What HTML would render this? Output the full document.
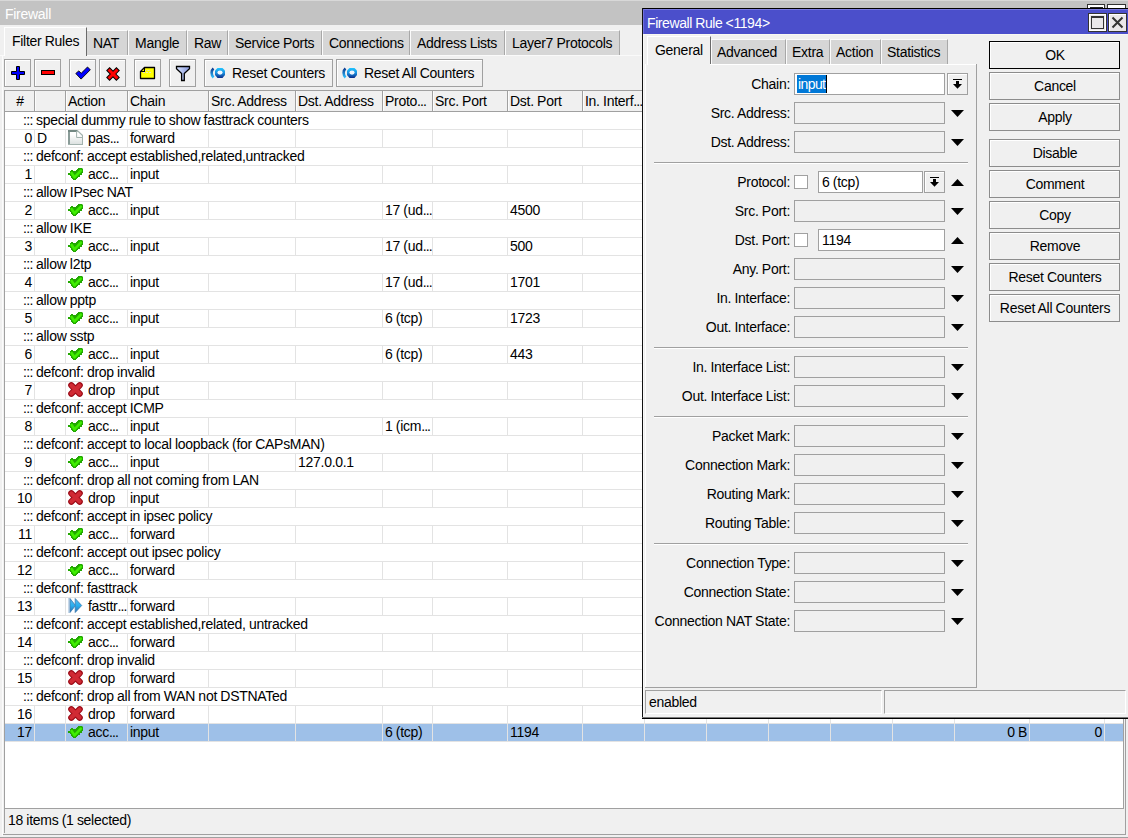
<!DOCTYPE html>
<html><head><meta charset="utf-8"><title>Firewall</title>
<style>
html,body{margin:0;padding:0}
body{width:1128px;height:838px;overflow:hidden;background:#f0f0f0;position:relative;font-family:"Liberation Sans",sans-serif;font-size:13px;color:#000}
body div{position:absolute}
.t{white-space:pre;line-height:15px;font-size:14px;letter-spacing:-0.28px;word-spacing:-0.3px}
svg{display:block}
</style></head><body>
<div style="left:0px;top:0px;width:1128px;height:1px;background:#d8d8d8"></div>
<div style="left:0px;top:1px;width:1128px;height:24px;background:#c3c3c3"></div>
<div class="t" style="left:5px;top:7px;color:#fff">Firewall</div>
<div style="left:1087px;top:4px;width:18px;height:6px;background:#fff;border:1px solid #333;box-sizing:border-box"></div>
<div style="left:1107px;top:4px;width:19px;height:6px;background:#fff;border:1px solid #333;box-sizing:border-box"></div>
<div style="left:1090px;top:7px;width:13px;height:2px;background:#222"></div>
<div style="left:0px;top:55px;width:1128px;height:1px;background:#fafafa"></div>
<div style="left:86px;top:30px;width:42px;height:25px;background:#d6d6d6;border-left:1px solid #fbfbfb;border-top:1px solid #fbfbfb;border-right:1px solid #a8a8a8;box-sizing:border-box"></div>
<div class="t" style="left:93px;top:36px;">NAT</div>
<div style="left:128px;top:30px;width:59px;height:25px;background:#d6d6d6;border-left:1px solid #fbfbfb;border-top:1px solid #fbfbfb;border-right:1px solid #a8a8a8;box-sizing:border-box"></div>
<div class="t" style="left:135px;top:36px;">Mangle</div>
<div style="left:187px;top:30px;width:41px;height:25px;background:#d6d6d6;border-left:1px solid #fbfbfb;border-top:1px solid #fbfbfb;border-right:1px solid #a8a8a8;box-sizing:border-box"></div>
<div class="t" style="left:194px;top:36px;">Raw</div>
<div style="left:228px;top:30px;width:94px;height:25px;background:#d6d6d6;border-left:1px solid #fbfbfb;border-top:1px solid #fbfbfb;border-right:1px solid #a8a8a8;box-sizing:border-box"></div>
<div class="t" style="left:235px;top:36px;">Service Ports</div>
<div style="left:322px;top:30px;width:88px;height:25px;background:#d6d6d6;border-left:1px solid #fbfbfb;border-top:1px solid #fbfbfb;border-right:1px solid #a8a8a8;box-sizing:border-box"></div>
<div class="t" style="left:329px;top:36px;">Connections</div>
<div style="left:410px;top:30px;width:95px;height:25px;background:#d6d6d6;border-left:1px solid #fbfbfb;border-top:1px solid #fbfbfb;border-right:1px solid #a8a8a8;box-sizing:border-box"></div>
<div class="t" style="left:417px;top:36px;">Address Lists</div>
<div style="left:505px;top:30px;width:115px;height:25px;background:#d6d6d6;border-left:1px solid #fbfbfb;border-top:1px solid #fbfbfb;border-right:1px solid #a8a8a8;box-sizing:border-box"></div>
<div class="t" style="left:512px;top:36px;">Layer7 Protocols</div>
<div style="left:4px;top:27px;width:83px;height:29px;background:#f0f0f0;border-left:1px solid #fff;border-top:1px solid #fff;border-right:1px solid #6a6a6a;box-sizing:border-box"></div>
<div class="t" style="left:12px;top:34px;">Filter Rules</div>
<div style="left:2px;top:56px;width:1px;height:780px;background:#fbfbfb"></div>
<div style="left:4px;top:59px;width:27px;height:28px;background:#f0f0f0;border:1px solid #a0a0a0;box-shadow:inset 1px 1px 0 #fff;box-sizing:border-box"></div>
<div style="left:34px;top:59px;width:27px;height:28px;background:#f0f0f0;border:1px solid #a0a0a0;box-shadow:inset 1px 1px 0 #fff;box-sizing:border-box"></div>
<div style="left:69px;top:59px;width:27px;height:28px;background:#f0f0f0;border:1px solid #a0a0a0;box-shadow:inset 1px 1px 0 #fff;box-sizing:border-box"></div>
<div style="left:99px;top:59px;width:27px;height:28px;background:#f0f0f0;border:1px solid #a0a0a0;box-shadow:inset 1px 1px 0 #fff;box-sizing:border-box"></div>
<div style="left:134px;top:59px;width:27px;height:28px;background:#f0f0f0;border:1px solid #a0a0a0;box-shadow:inset 1px 1px 0 #fff;box-sizing:border-box"></div>
<div style="left:169px;top:59px;width:27px;height:28px;background:#f0f0f0;border:1px solid #a0a0a0;box-shadow:inset 1px 1px 0 #fff;box-sizing:border-box"></div>
<div style="left:204px;top:59px;width:129px;height:28px;background:#f0f0f0;border:1px solid #a0a0a0;box-shadow:inset 1px 1px 0 #fff;box-sizing:border-box"></div>
<div style="left:336px;top:59px;width:147px;height:28px;background:#f0f0f0;border:1px solid #a0a0a0;box-shadow:inset 1px 1px 0 #fff;box-sizing:border-box"></div>
<div style="left:10px;top:65px"><svg width="16" height="16" viewBox="0 0 16 16"><path d="M6.5 1.5h3v5h5v3h-5v5h-3v-5h-5v-3h5z" fill="#0000ff" stroke="#000" stroke-width="1"/></svg></div>
<div style="left:40px;top:69px"><svg width="16" height="8" viewBox="0 0 16 8"><rect x="1.5" y="1.5" width="13" height="4" fill="#ff0000" stroke="#000" stroke-width="1"/></svg></div>
<div style="left:75px;top:66px"><svg width="16" height="14" viewBox="0 0 16 14"><path d="M0.8 7.5l3-2.6 2.4 2.4 6.3-6.3 2.8 2.8-9.2 9.3z" fill="#0000ff" stroke="#000" stroke-width="0.9"/></svg></div>
<div style="left:106px;top:67px"><svg width="14" height="14" viewBox="0 0 14 14"><path d="M3.6 3.6L10.4 10.4M10.4 3.6L3.6 10.4" stroke="#000" stroke-width="5" stroke-linecap="square"/><path d="M3.6 3.6L10.4 10.4M10.4 3.6L3.6 10.4" stroke="#ff0000" stroke-width="3" stroke-linecap="square"/></svg></div>
<div style="left:139px;top:66px"><svg width="17" height="14" viewBox="0 0 17 14"><path d="M5.5 1.5h10v11H1.5V5.5z" fill="#ffff00" stroke="#000" stroke-width="1.3" stroke-linejoin="round"/><path d="M1.5 5.5h4v-4" fill="none" stroke="#000" stroke-width="1.1"/><path d="M6 4.5h1M8.5 4.5h2M4 6.5h2M7 6.5h2M10 6.5h2" stroke="#d8d8f0" stroke-width="0.8"/></svg></div>
<div style="left:175px;top:65px"><svg width="16" height="17" viewBox="0 0 16 17"><defs><linearGradient id="fg" x1="0" y1="0" x2="1" y2="0"><stop offset="0" stop-color="#d8e4ff"/><stop offset="1" stop-color="#8898dc"/></linearGradient></defs><path d="M1.5 1.5H14.5V3.8L9.3 8.6V15.5H6.6V8.6L1.5 3.8Z" fill="url(#fg)" stroke="#000" stroke-width="1.3" stroke-linejoin="miter"/></svg></div>
<div style="left:209px;top:67px"><svg width="17" height="12" viewBox="0 0 17 12"><defs><linearGradient id="rg1" x1="0" y1="0" x2="0" y2="1"><stop offset="0" stop-color="#0a3a90"/><stop offset="1" stop-color="#30c0ff"/></linearGradient><linearGradient id="rg2" x1="0" y1="0" x2="0" y2="1"><stop offset="0" stop-color="#20c4ff"/><stop offset="0.5" stop-color="#1a90e0"/><stop offset="1" stop-color="#0a2a88"/></linearGradient></defs><path d="M4.5 1.5C2 3.5 2 8 4.5 10.5" fill="none" stroke="url(#rg1)" stroke-width="2.6"/><path d="M8.5 1h5l2.5 2.5v4.5l-2.5 3h-5l-2.5-3v-4.5z" fill="url(#rg2)"/><ellipse cx="11" cy="5.6" rx="2.6" ry="2.1" fill="#f0f6ff"/></svg></div>
<div class="t" style="left:232px;top:66px;">Reset Counters</div>
<div style="left:341px;top:67px"><svg width="17" height="12" viewBox="0 0 17 12"><defs><linearGradient id="rg1" x1="0" y1="0" x2="0" y2="1"><stop offset="0" stop-color="#0a3a90"/><stop offset="1" stop-color="#30c0ff"/></linearGradient><linearGradient id="rg2" x1="0" y1="0" x2="0" y2="1"><stop offset="0" stop-color="#20c4ff"/><stop offset="0.5" stop-color="#1a90e0"/><stop offset="1" stop-color="#0a2a88"/></linearGradient></defs><path d="M4.5 1.5C2 3.5 2 8 4.5 10.5" fill="none" stroke="url(#rg1)" stroke-width="2.6"/><path d="M8.5 1h5l2.5 2.5v4.5l-2.5 3h-5l-2.5-3v-4.5z" fill="url(#rg2)"/><ellipse cx="11" cy="5.6" rx="2.6" ry="2.1" fill="#f0f6ff"/></svg></div>
<div class="t" style="left:364px;top:66px;">Reset All Counters</div>
<div style="left:4px;top:90px;width:1120px;height:719px;background:#fff;border:1px solid #a0a0a0;box-sizing:border-box"></div>
<div style="left:5px;top:91px;width:1118px;height:20px;background:#f0f0f0"></div>
<div style="left:5px;top:111px;width:1118px;height:1px;background:#a0a0a0"></div>
<div style="left:34px;top:91px;width:1px;height:20px;background:#a0a0a0"></div>
<div style="left:35px;top:91px;width:1px;height:20px;background:#fcfcfc"></div>
<div style="left:65px;top:91px;width:1px;height:20px;background:#a0a0a0"></div>
<div style="left:66px;top:91px;width:1px;height:20px;background:#fcfcfc"></div>
<div style="left:127px;top:91px;width:1px;height:20px;background:#a0a0a0"></div>
<div style="left:128px;top:91px;width:1px;height:20px;background:#fcfcfc"></div>
<div style="left:208px;top:91px;width:1px;height:20px;background:#a0a0a0"></div>
<div style="left:209px;top:91px;width:1px;height:20px;background:#fcfcfc"></div>
<div style="left:295px;top:91px;width:1px;height:20px;background:#a0a0a0"></div>
<div style="left:296px;top:91px;width:1px;height:20px;background:#fcfcfc"></div>
<div style="left:382px;top:91px;width:1px;height:20px;background:#a0a0a0"></div>
<div style="left:383px;top:91px;width:1px;height:20px;background:#fcfcfc"></div>
<div style="left:432px;top:91px;width:1px;height:20px;background:#a0a0a0"></div>
<div style="left:433px;top:91px;width:1px;height:20px;background:#fcfcfc"></div>
<div style="left:507px;top:91px;width:1px;height:20px;background:#a0a0a0"></div>
<div style="left:508px;top:91px;width:1px;height:20px;background:#fcfcfc"></div>
<div style="left:582px;top:91px;width:1px;height:20px;background:#a0a0a0"></div>
<div style="left:583px;top:91px;width:1px;height:20px;background:#fcfcfc"></div>
<div style="left:644px;top:91px;width:1px;height:20px;background:#a0a0a0"></div>
<div style="left:645px;top:91px;width:1px;height:20px;background:#fcfcfc"></div>
<div style="left:706px;top:91px;width:1px;height:20px;background:#a0a0a0"></div>
<div style="left:707px;top:91px;width:1px;height:20px;background:#fcfcfc"></div>
<div style="left:768px;top:91px;width:1px;height:20px;background:#a0a0a0"></div>
<div style="left:769px;top:91px;width:1px;height:20px;background:#fcfcfc"></div>
<div style="left:830px;top:91px;width:1px;height:20px;background:#a0a0a0"></div>
<div style="left:831px;top:91px;width:1px;height:20px;background:#fcfcfc"></div>
<div style="left:892px;top:91px;width:1px;height:20px;background:#a0a0a0"></div>
<div style="left:893px;top:91px;width:1px;height:20px;background:#fcfcfc"></div>
<div style="left:954px;top:91px;width:1px;height:20px;background:#a0a0a0"></div>
<div style="left:955px;top:91px;width:1px;height:20px;background:#fcfcfc"></div>
<div style="left:1029px;top:91px;width:1px;height:20px;background:#a0a0a0"></div>
<div style="left:1030px;top:91px;width:1px;height:20px;background:#fcfcfc"></div>
<div style="left:1104px;top:91px;width:1px;height:20px;background:#a0a0a0"></div>
<div style="left:1105px;top:91px;width:1px;height:20px;background:#fcfcfc"></div>
<div class="t" style="left:-180px;width:400px;text-align:center;top:94px;">#</div>
<div class="t" style="left:68px;top:94px;">Action</div>
<div class="t" style="left:130px;top:94px;">Chain</div>
<div class="t" style="left:211px;top:94px;">Src. Address</div>
<div class="t" style="left:298px;top:94px;">Dst. Address</div>
<div class="t" style="left:385px;top:94px;">Proto<span style="letter-spacing:-0.9px">...</span></div>
<div class="t" style="left:435px;top:94px;">Src. Port</div>
<div class="t" style="left:510px;top:94px;">Dst. Port</div>
<div class="t" style="left:585px;top:94px;">In. Interf<span style="letter-spacing:-0.9px">...</span></div>
<div class="t" style="left:23px;top:113px;letter-spacing:-0.7px">:::</div>
<div class="t" style="left:36px;top:113px;">special dummy rule to show fasttrack counters</div>
<div style="left:5px;top:129px;width:1118px;height:1px;background:#e3e3e3"></div>
<div style="left:34px;top:130px;width:1px;height:17px;background:#e3e3e3"></div>
<div style="left:65px;top:130px;width:1px;height:17px;background:#e3e3e3"></div>
<div style="left:127px;top:130px;width:1px;height:17px;background:#e3e3e3"></div>
<div style="left:208px;top:130px;width:1px;height:17px;background:#e3e3e3"></div>
<div style="left:295px;top:130px;width:1px;height:17px;background:#e3e3e3"></div>
<div style="left:382px;top:130px;width:1px;height:17px;background:#e3e3e3"></div>
<div style="left:432px;top:130px;width:1px;height:17px;background:#e3e3e3"></div>
<div style="left:507px;top:130px;width:1px;height:17px;background:#e3e3e3"></div>
<div style="left:582px;top:130px;width:1px;height:17px;background:#e3e3e3"></div>
<div style="left:644px;top:130px;width:1px;height:17px;background:#e3e3e3"></div>
<div style="left:706px;top:130px;width:1px;height:17px;background:#e3e3e3"></div>
<div style="left:768px;top:130px;width:1px;height:17px;background:#e3e3e3"></div>
<div style="left:830px;top:130px;width:1px;height:17px;background:#e3e3e3"></div>
<div style="left:892px;top:130px;width:1px;height:17px;background:#e3e3e3"></div>
<div style="left:954px;top:130px;width:1px;height:17px;background:#e3e3e3"></div>
<div style="left:1029px;top:130px;width:1px;height:17px;background:#e3e3e3"></div>
<div style="left:1104px;top:130px;width:1px;height:17px;background:#e3e3e3"></div>
<div class="t" style="left:-368px;width:400px;text-align:right;top:131px;">0</div>
<div class="t" style="left:37px;top:131px;">D</div>
<div style="left:68px;top:130px"><svg width="15" height="15" viewBox="0 0 15 15"><defs><linearGradient id="dg" x1="0" y1="0" x2="0" y2="1"><stop offset="0.3" stop-color="#ffffff"/><stop offset="1" stop-color="#d8dedd"/></linearGradient></defs><path d="M0 0H9.6L15 5.4V15H0Z" fill="url(#dg)"/><rect x="0" y="0" width="2" height="15" fill="#8a9c98"/><rect x="0" y="0" width="9.6" height="2" fill="#738883"/><rect x="14" y="5" width="1" height="10" fill="#a2b2ae"/><rect x="0" y="14" width="15" height="1" fill="#a2b2ae"/><path d="M9.4 0.6L14.6 5.6" stroke="#a2b2ae" stroke-width="1.3"/><path d="M8.6 1V7.5H15" fill="none" stroke="#a2b2ae" stroke-width="1"/></svg></div>
<div class="t" style="left:88px;top:131px;">pas<span style="letter-spacing:-0.9px">...</span></div>
<div class="t" style="left:130px;top:131px;">forward</div>
<div style="left:5px;top:147px;width:1118px;height:1px;background:#e3e3e3"></div>
<div class="t" style="left:23px;top:149px;letter-spacing:-0.7px">:::</div>
<div class="t" style="left:36px;top:149px;">defconf: accept established,related,untracked</div>
<div style="left:5px;top:165px;width:1118px;height:1px;background:#e3e3e3"></div>
<div style="left:34px;top:166px;width:1px;height:17px;background:#e3e3e3"></div>
<div style="left:65px;top:166px;width:1px;height:17px;background:#e3e3e3"></div>
<div style="left:127px;top:166px;width:1px;height:17px;background:#e3e3e3"></div>
<div style="left:208px;top:166px;width:1px;height:17px;background:#e3e3e3"></div>
<div style="left:295px;top:166px;width:1px;height:17px;background:#e3e3e3"></div>
<div style="left:382px;top:166px;width:1px;height:17px;background:#e3e3e3"></div>
<div style="left:432px;top:166px;width:1px;height:17px;background:#e3e3e3"></div>
<div style="left:507px;top:166px;width:1px;height:17px;background:#e3e3e3"></div>
<div style="left:582px;top:166px;width:1px;height:17px;background:#e3e3e3"></div>
<div style="left:644px;top:166px;width:1px;height:17px;background:#e3e3e3"></div>
<div style="left:706px;top:166px;width:1px;height:17px;background:#e3e3e3"></div>
<div style="left:768px;top:166px;width:1px;height:17px;background:#e3e3e3"></div>
<div style="left:830px;top:166px;width:1px;height:17px;background:#e3e3e3"></div>
<div style="left:892px;top:166px;width:1px;height:17px;background:#e3e3e3"></div>
<div style="left:954px;top:166px;width:1px;height:17px;background:#e3e3e3"></div>
<div style="left:1029px;top:166px;width:1px;height:17px;background:#e3e3e3"></div>
<div style="left:1104px;top:166px;width:1px;height:17px;background:#e3e3e3"></div>
<div class="t" style="left:-368px;width:400px;text-align:right;top:167px;">1</div>
<div style="left:68px;top:168px"><svg width="15" height="12" viewBox="0 0 15 12"><path d="M10 0H14L15 1V5H14V7H12V9H10V10H9V11H8V12H5V11H4V10H3V8H2V7H0V5H2V3H3V2H5V3H8V2H9V1H10Z" fill="#22a800"/><path d="M3.6 5L6.5 9.3L12.8 2.6" fill="none" stroke="#40ee00" stroke-width="2.6" stroke-linejoin="round" stroke-linecap="round"/></svg></div>
<div class="t" style="left:88px;top:167px;">acc<span style="letter-spacing:-0.9px">...</span></div>
<div class="t" style="left:130px;top:167px;">input</div>
<div style="left:5px;top:183px;width:1118px;height:1px;background:#e3e3e3"></div>
<div class="t" style="left:23px;top:185px;letter-spacing:-0.7px">:::</div>
<div class="t" style="left:36px;top:185px;">allow IPsec NAT</div>
<div style="left:5px;top:201px;width:1118px;height:1px;background:#e3e3e3"></div>
<div style="left:34px;top:202px;width:1px;height:17px;background:#e3e3e3"></div>
<div style="left:65px;top:202px;width:1px;height:17px;background:#e3e3e3"></div>
<div style="left:127px;top:202px;width:1px;height:17px;background:#e3e3e3"></div>
<div style="left:208px;top:202px;width:1px;height:17px;background:#e3e3e3"></div>
<div style="left:295px;top:202px;width:1px;height:17px;background:#e3e3e3"></div>
<div style="left:382px;top:202px;width:1px;height:17px;background:#e3e3e3"></div>
<div style="left:432px;top:202px;width:1px;height:17px;background:#e3e3e3"></div>
<div style="left:507px;top:202px;width:1px;height:17px;background:#e3e3e3"></div>
<div style="left:582px;top:202px;width:1px;height:17px;background:#e3e3e3"></div>
<div style="left:644px;top:202px;width:1px;height:17px;background:#e3e3e3"></div>
<div style="left:706px;top:202px;width:1px;height:17px;background:#e3e3e3"></div>
<div style="left:768px;top:202px;width:1px;height:17px;background:#e3e3e3"></div>
<div style="left:830px;top:202px;width:1px;height:17px;background:#e3e3e3"></div>
<div style="left:892px;top:202px;width:1px;height:17px;background:#e3e3e3"></div>
<div style="left:954px;top:202px;width:1px;height:17px;background:#e3e3e3"></div>
<div style="left:1029px;top:202px;width:1px;height:17px;background:#e3e3e3"></div>
<div style="left:1104px;top:202px;width:1px;height:17px;background:#e3e3e3"></div>
<div class="t" style="left:-368px;width:400px;text-align:right;top:203px;">2</div>
<div style="left:68px;top:204px"><svg width="15" height="12" viewBox="0 0 15 12"><path d="M10 0H14L15 1V5H14V7H12V9H10V10H9V11H8V12H5V11H4V10H3V8H2V7H0V5H2V3H3V2H5V3H8V2H9V1H10Z" fill="#22a800"/><path d="M3.6 5L6.5 9.3L12.8 2.6" fill="none" stroke="#40ee00" stroke-width="2.6" stroke-linejoin="round" stroke-linecap="round"/></svg></div>
<div class="t" style="left:88px;top:203px;">acc<span style="letter-spacing:-0.9px">...</span></div>
<div class="t" style="left:130px;top:203px;">input</div>
<div class="t" style="left:385px;top:203px;">17 (ud<span style="letter-spacing:-0.9px">...</span></div>
<div class="t" style="left:510px;top:203px;">4500</div>
<div style="left:5px;top:219px;width:1118px;height:1px;background:#e3e3e3"></div>
<div class="t" style="left:23px;top:221px;letter-spacing:-0.7px">:::</div>
<div class="t" style="left:36px;top:221px;">allow IKE</div>
<div style="left:5px;top:237px;width:1118px;height:1px;background:#e3e3e3"></div>
<div style="left:34px;top:238px;width:1px;height:17px;background:#e3e3e3"></div>
<div style="left:65px;top:238px;width:1px;height:17px;background:#e3e3e3"></div>
<div style="left:127px;top:238px;width:1px;height:17px;background:#e3e3e3"></div>
<div style="left:208px;top:238px;width:1px;height:17px;background:#e3e3e3"></div>
<div style="left:295px;top:238px;width:1px;height:17px;background:#e3e3e3"></div>
<div style="left:382px;top:238px;width:1px;height:17px;background:#e3e3e3"></div>
<div style="left:432px;top:238px;width:1px;height:17px;background:#e3e3e3"></div>
<div style="left:507px;top:238px;width:1px;height:17px;background:#e3e3e3"></div>
<div style="left:582px;top:238px;width:1px;height:17px;background:#e3e3e3"></div>
<div style="left:644px;top:238px;width:1px;height:17px;background:#e3e3e3"></div>
<div style="left:706px;top:238px;width:1px;height:17px;background:#e3e3e3"></div>
<div style="left:768px;top:238px;width:1px;height:17px;background:#e3e3e3"></div>
<div style="left:830px;top:238px;width:1px;height:17px;background:#e3e3e3"></div>
<div style="left:892px;top:238px;width:1px;height:17px;background:#e3e3e3"></div>
<div style="left:954px;top:238px;width:1px;height:17px;background:#e3e3e3"></div>
<div style="left:1029px;top:238px;width:1px;height:17px;background:#e3e3e3"></div>
<div style="left:1104px;top:238px;width:1px;height:17px;background:#e3e3e3"></div>
<div class="t" style="left:-368px;width:400px;text-align:right;top:239px;">3</div>
<div style="left:68px;top:240px"><svg width="15" height="12" viewBox="0 0 15 12"><path d="M10 0H14L15 1V5H14V7H12V9H10V10H9V11H8V12H5V11H4V10H3V8H2V7H0V5H2V3H3V2H5V3H8V2H9V1H10Z" fill="#22a800"/><path d="M3.6 5L6.5 9.3L12.8 2.6" fill="none" stroke="#40ee00" stroke-width="2.6" stroke-linejoin="round" stroke-linecap="round"/></svg></div>
<div class="t" style="left:88px;top:239px;">acc<span style="letter-spacing:-0.9px">...</span></div>
<div class="t" style="left:130px;top:239px;">input</div>
<div class="t" style="left:385px;top:239px;">17 (ud<span style="letter-spacing:-0.9px">...</span></div>
<div class="t" style="left:510px;top:239px;">500</div>
<div style="left:5px;top:255px;width:1118px;height:1px;background:#e3e3e3"></div>
<div class="t" style="left:23px;top:257px;letter-spacing:-0.7px">:::</div>
<div class="t" style="left:36px;top:257px;">allow l2tp</div>
<div style="left:5px;top:273px;width:1118px;height:1px;background:#e3e3e3"></div>
<div style="left:34px;top:274px;width:1px;height:17px;background:#e3e3e3"></div>
<div style="left:65px;top:274px;width:1px;height:17px;background:#e3e3e3"></div>
<div style="left:127px;top:274px;width:1px;height:17px;background:#e3e3e3"></div>
<div style="left:208px;top:274px;width:1px;height:17px;background:#e3e3e3"></div>
<div style="left:295px;top:274px;width:1px;height:17px;background:#e3e3e3"></div>
<div style="left:382px;top:274px;width:1px;height:17px;background:#e3e3e3"></div>
<div style="left:432px;top:274px;width:1px;height:17px;background:#e3e3e3"></div>
<div style="left:507px;top:274px;width:1px;height:17px;background:#e3e3e3"></div>
<div style="left:582px;top:274px;width:1px;height:17px;background:#e3e3e3"></div>
<div style="left:644px;top:274px;width:1px;height:17px;background:#e3e3e3"></div>
<div style="left:706px;top:274px;width:1px;height:17px;background:#e3e3e3"></div>
<div style="left:768px;top:274px;width:1px;height:17px;background:#e3e3e3"></div>
<div style="left:830px;top:274px;width:1px;height:17px;background:#e3e3e3"></div>
<div style="left:892px;top:274px;width:1px;height:17px;background:#e3e3e3"></div>
<div style="left:954px;top:274px;width:1px;height:17px;background:#e3e3e3"></div>
<div style="left:1029px;top:274px;width:1px;height:17px;background:#e3e3e3"></div>
<div style="left:1104px;top:274px;width:1px;height:17px;background:#e3e3e3"></div>
<div class="t" style="left:-368px;width:400px;text-align:right;top:275px;">4</div>
<div style="left:68px;top:276px"><svg width="15" height="12" viewBox="0 0 15 12"><path d="M10 0H14L15 1V5H14V7H12V9H10V10H9V11H8V12H5V11H4V10H3V8H2V7H0V5H2V3H3V2H5V3H8V2H9V1H10Z" fill="#22a800"/><path d="M3.6 5L6.5 9.3L12.8 2.6" fill="none" stroke="#40ee00" stroke-width="2.6" stroke-linejoin="round" stroke-linecap="round"/></svg></div>
<div class="t" style="left:88px;top:275px;">acc<span style="letter-spacing:-0.9px">...</span></div>
<div class="t" style="left:130px;top:275px;">input</div>
<div class="t" style="left:385px;top:275px;">17 (ud<span style="letter-spacing:-0.9px">...</span></div>
<div class="t" style="left:510px;top:275px;">1701</div>
<div style="left:5px;top:291px;width:1118px;height:1px;background:#e3e3e3"></div>
<div class="t" style="left:23px;top:293px;letter-spacing:-0.7px">:::</div>
<div class="t" style="left:36px;top:293px;">allow pptp</div>
<div style="left:5px;top:309px;width:1118px;height:1px;background:#e3e3e3"></div>
<div style="left:34px;top:310px;width:1px;height:17px;background:#e3e3e3"></div>
<div style="left:65px;top:310px;width:1px;height:17px;background:#e3e3e3"></div>
<div style="left:127px;top:310px;width:1px;height:17px;background:#e3e3e3"></div>
<div style="left:208px;top:310px;width:1px;height:17px;background:#e3e3e3"></div>
<div style="left:295px;top:310px;width:1px;height:17px;background:#e3e3e3"></div>
<div style="left:382px;top:310px;width:1px;height:17px;background:#e3e3e3"></div>
<div style="left:432px;top:310px;width:1px;height:17px;background:#e3e3e3"></div>
<div style="left:507px;top:310px;width:1px;height:17px;background:#e3e3e3"></div>
<div style="left:582px;top:310px;width:1px;height:17px;background:#e3e3e3"></div>
<div style="left:644px;top:310px;width:1px;height:17px;background:#e3e3e3"></div>
<div style="left:706px;top:310px;width:1px;height:17px;background:#e3e3e3"></div>
<div style="left:768px;top:310px;width:1px;height:17px;background:#e3e3e3"></div>
<div style="left:830px;top:310px;width:1px;height:17px;background:#e3e3e3"></div>
<div style="left:892px;top:310px;width:1px;height:17px;background:#e3e3e3"></div>
<div style="left:954px;top:310px;width:1px;height:17px;background:#e3e3e3"></div>
<div style="left:1029px;top:310px;width:1px;height:17px;background:#e3e3e3"></div>
<div style="left:1104px;top:310px;width:1px;height:17px;background:#e3e3e3"></div>
<div class="t" style="left:-368px;width:400px;text-align:right;top:311px;">5</div>
<div style="left:68px;top:312px"><svg width="15" height="12" viewBox="0 0 15 12"><path d="M10 0H14L15 1V5H14V7H12V9H10V10H9V11H8V12H5V11H4V10H3V8H2V7H0V5H2V3H3V2H5V3H8V2H9V1H10Z" fill="#22a800"/><path d="M3.6 5L6.5 9.3L12.8 2.6" fill="none" stroke="#40ee00" stroke-width="2.6" stroke-linejoin="round" stroke-linecap="round"/></svg></div>
<div class="t" style="left:88px;top:311px;">acc<span style="letter-spacing:-0.9px">...</span></div>
<div class="t" style="left:130px;top:311px;">input</div>
<div class="t" style="left:385px;top:311px;">6 (tcp)</div>
<div class="t" style="left:510px;top:311px;">1723</div>
<div style="left:5px;top:327px;width:1118px;height:1px;background:#e3e3e3"></div>
<div class="t" style="left:23px;top:329px;letter-spacing:-0.7px">:::</div>
<div class="t" style="left:36px;top:329px;">allow sstp</div>
<div style="left:5px;top:345px;width:1118px;height:1px;background:#e3e3e3"></div>
<div style="left:34px;top:346px;width:1px;height:17px;background:#e3e3e3"></div>
<div style="left:65px;top:346px;width:1px;height:17px;background:#e3e3e3"></div>
<div style="left:127px;top:346px;width:1px;height:17px;background:#e3e3e3"></div>
<div style="left:208px;top:346px;width:1px;height:17px;background:#e3e3e3"></div>
<div style="left:295px;top:346px;width:1px;height:17px;background:#e3e3e3"></div>
<div style="left:382px;top:346px;width:1px;height:17px;background:#e3e3e3"></div>
<div style="left:432px;top:346px;width:1px;height:17px;background:#e3e3e3"></div>
<div style="left:507px;top:346px;width:1px;height:17px;background:#e3e3e3"></div>
<div style="left:582px;top:346px;width:1px;height:17px;background:#e3e3e3"></div>
<div style="left:644px;top:346px;width:1px;height:17px;background:#e3e3e3"></div>
<div style="left:706px;top:346px;width:1px;height:17px;background:#e3e3e3"></div>
<div style="left:768px;top:346px;width:1px;height:17px;background:#e3e3e3"></div>
<div style="left:830px;top:346px;width:1px;height:17px;background:#e3e3e3"></div>
<div style="left:892px;top:346px;width:1px;height:17px;background:#e3e3e3"></div>
<div style="left:954px;top:346px;width:1px;height:17px;background:#e3e3e3"></div>
<div style="left:1029px;top:346px;width:1px;height:17px;background:#e3e3e3"></div>
<div style="left:1104px;top:346px;width:1px;height:17px;background:#e3e3e3"></div>
<div class="t" style="left:-368px;width:400px;text-align:right;top:347px;">6</div>
<div style="left:68px;top:348px"><svg width="15" height="12" viewBox="0 0 15 12"><path d="M10 0H14L15 1V5H14V7H12V9H10V10H9V11H8V12H5V11H4V10H3V8H2V7H0V5H2V3H3V2H5V3H8V2H9V1H10Z" fill="#22a800"/><path d="M3.6 5L6.5 9.3L12.8 2.6" fill="none" stroke="#40ee00" stroke-width="2.6" stroke-linejoin="round" stroke-linecap="round"/></svg></div>
<div class="t" style="left:88px;top:347px;">acc<span style="letter-spacing:-0.9px">...</span></div>
<div class="t" style="left:130px;top:347px;">input</div>
<div class="t" style="left:385px;top:347px;">6 (tcp)</div>
<div class="t" style="left:510px;top:347px;">443</div>
<div style="left:5px;top:363px;width:1118px;height:1px;background:#e3e3e3"></div>
<div class="t" style="left:23px;top:365px;letter-spacing:-0.7px">:::</div>
<div class="t" style="left:36px;top:365px;">defconf: drop invalid</div>
<div style="left:5px;top:381px;width:1118px;height:1px;background:#e3e3e3"></div>
<div style="left:34px;top:382px;width:1px;height:17px;background:#e3e3e3"></div>
<div style="left:65px;top:382px;width:1px;height:17px;background:#e3e3e3"></div>
<div style="left:127px;top:382px;width:1px;height:17px;background:#e3e3e3"></div>
<div style="left:208px;top:382px;width:1px;height:17px;background:#e3e3e3"></div>
<div style="left:295px;top:382px;width:1px;height:17px;background:#e3e3e3"></div>
<div style="left:382px;top:382px;width:1px;height:17px;background:#e3e3e3"></div>
<div style="left:432px;top:382px;width:1px;height:17px;background:#e3e3e3"></div>
<div style="left:507px;top:382px;width:1px;height:17px;background:#e3e3e3"></div>
<div style="left:582px;top:382px;width:1px;height:17px;background:#e3e3e3"></div>
<div style="left:644px;top:382px;width:1px;height:17px;background:#e3e3e3"></div>
<div style="left:706px;top:382px;width:1px;height:17px;background:#e3e3e3"></div>
<div style="left:768px;top:382px;width:1px;height:17px;background:#e3e3e3"></div>
<div style="left:830px;top:382px;width:1px;height:17px;background:#e3e3e3"></div>
<div style="left:892px;top:382px;width:1px;height:17px;background:#e3e3e3"></div>
<div style="left:954px;top:382px;width:1px;height:17px;background:#e3e3e3"></div>
<div style="left:1029px;top:382px;width:1px;height:17px;background:#e3e3e3"></div>
<div style="left:1104px;top:382px;width:1px;height:17px;background:#e3e3e3"></div>
<div class="t" style="left:-368px;width:400px;text-align:right;top:383px;">7</div>
<div style="left:68px;top:382px"><svg width="15" height="15" viewBox="0 0 15 15"><path d="M3.3 3.3L11.7 11.7M11.7 3.3L3.3 11.7" fill="none" stroke="#9a0a16" stroke-width="6.2" stroke-linecap="round"/><path d="M3.4 3.4L11.6 11.6M11.6 3.4L3.4 11.6" fill="none" stroke="#d02a34" stroke-width="4.2" stroke-linecap="round"/></svg></div>
<div class="t" style="left:88px;top:383px;">drop</div>
<div class="t" style="left:130px;top:383px;">input</div>
<div style="left:5px;top:399px;width:1118px;height:1px;background:#e3e3e3"></div>
<div class="t" style="left:23px;top:401px;letter-spacing:-0.7px">:::</div>
<div class="t" style="left:36px;top:401px;">defconf: accept ICMP</div>
<div style="left:5px;top:417px;width:1118px;height:1px;background:#e3e3e3"></div>
<div style="left:34px;top:418px;width:1px;height:17px;background:#e3e3e3"></div>
<div style="left:65px;top:418px;width:1px;height:17px;background:#e3e3e3"></div>
<div style="left:127px;top:418px;width:1px;height:17px;background:#e3e3e3"></div>
<div style="left:208px;top:418px;width:1px;height:17px;background:#e3e3e3"></div>
<div style="left:295px;top:418px;width:1px;height:17px;background:#e3e3e3"></div>
<div style="left:382px;top:418px;width:1px;height:17px;background:#e3e3e3"></div>
<div style="left:432px;top:418px;width:1px;height:17px;background:#e3e3e3"></div>
<div style="left:507px;top:418px;width:1px;height:17px;background:#e3e3e3"></div>
<div style="left:582px;top:418px;width:1px;height:17px;background:#e3e3e3"></div>
<div style="left:644px;top:418px;width:1px;height:17px;background:#e3e3e3"></div>
<div style="left:706px;top:418px;width:1px;height:17px;background:#e3e3e3"></div>
<div style="left:768px;top:418px;width:1px;height:17px;background:#e3e3e3"></div>
<div style="left:830px;top:418px;width:1px;height:17px;background:#e3e3e3"></div>
<div style="left:892px;top:418px;width:1px;height:17px;background:#e3e3e3"></div>
<div style="left:954px;top:418px;width:1px;height:17px;background:#e3e3e3"></div>
<div style="left:1029px;top:418px;width:1px;height:17px;background:#e3e3e3"></div>
<div style="left:1104px;top:418px;width:1px;height:17px;background:#e3e3e3"></div>
<div class="t" style="left:-368px;width:400px;text-align:right;top:419px;">8</div>
<div style="left:68px;top:420px"><svg width="15" height="12" viewBox="0 0 15 12"><path d="M10 0H14L15 1V5H14V7H12V9H10V10H9V11H8V12H5V11H4V10H3V8H2V7H0V5H2V3H3V2H5V3H8V2H9V1H10Z" fill="#22a800"/><path d="M3.6 5L6.5 9.3L12.8 2.6" fill="none" stroke="#40ee00" stroke-width="2.6" stroke-linejoin="round" stroke-linecap="round"/></svg></div>
<div class="t" style="left:88px;top:419px;">acc<span style="letter-spacing:-0.9px">...</span></div>
<div class="t" style="left:130px;top:419px;">input</div>
<div class="t" style="left:385px;top:419px;">1 (icm<span style="letter-spacing:-0.9px">...</span></div>
<div style="left:5px;top:435px;width:1118px;height:1px;background:#e3e3e3"></div>
<div class="t" style="left:23px;top:437px;letter-spacing:-0.7px">:::</div>
<div class="t" style="left:36px;top:437px;">defconf: accept to local loopback (for CAPsMAN)</div>
<div style="left:5px;top:453px;width:1118px;height:1px;background:#e3e3e3"></div>
<div style="left:34px;top:454px;width:1px;height:17px;background:#e3e3e3"></div>
<div style="left:65px;top:454px;width:1px;height:17px;background:#e3e3e3"></div>
<div style="left:127px;top:454px;width:1px;height:17px;background:#e3e3e3"></div>
<div style="left:208px;top:454px;width:1px;height:17px;background:#e3e3e3"></div>
<div style="left:295px;top:454px;width:1px;height:17px;background:#e3e3e3"></div>
<div style="left:382px;top:454px;width:1px;height:17px;background:#e3e3e3"></div>
<div style="left:432px;top:454px;width:1px;height:17px;background:#e3e3e3"></div>
<div style="left:507px;top:454px;width:1px;height:17px;background:#e3e3e3"></div>
<div style="left:582px;top:454px;width:1px;height:17px;background:#e3e3e3"></div>
<div style="left:644px;top:454px;width:1px;height:17px;background:#e3e3e3"></div>
<div style="left:706px;top:454px;width:1px;height:17px;background:#e3e3e3"></div>
<div style="left:768px;top:454px;width:1px;height:17px;background:#e3e3e3"></div>
<div style="left:830px;top:454px;width:1px;height:17px;background:#e3e3e3"></div>
<div style="left:892px;top:454px;width:1px;height:17px;background:#e3e3e3"></div>
<div style="left:954px;top:454px;width:1px;height:17px;background:#e3e3e3"></div>
<div style="left:1029px;top:454px;width:1px;height:17px;background:#e3e3e3"></div>
<div style="left:1104px;top:454px;width:1px;height:17px;background:#e3e3e3"></div>
<div class="t" style="left:-368px;width:400px;text-align:right;top:455px;">9</div>
<div style="left:68px;top:456px"><svg width="15" height="12" viewBox="0 0 15 12"><path d="M10 0H14L15 1V5H14V7H12V9H10V10H9V11H8V12H5V11H4V10H3V8H2V7H0V5H2V3H3V2H5V3H8V2H9V1H10Z" fill="#22a800"/><path d="M3.6 5L6.5 9.3L12.8 2.6" fill="none" stroke="#40ee00" stroke-width="2.6" stroke-linejoin="round" stroke-linecap="round"/></svg></div>
<div class="t" style="left:88px;top:455px;">acc<span style="letter-spacing:-0.9px">...</span></div>
<div class="t" style="left:130px;top:455px;">input</div>
<div class="t" style="left:298px;top:455px;">127.0.0.1</div>
<div style="left:5px;top:471px;width:1118px;height:1px;background:#e3e3e3"></div>
<div class="t" style="left:23px;top:473px;letter-spacing:-0.7px">:::</div>
<div class="t" style="left:36px;top:473px;">defconf: drop all not coming from LAN</div>
<div style="left:5px;top:489px;width:1118px;height:1px;background:#e3e3e3"></div>
<div style="left:34px;top:490px;width:1px;height:17px;background:#e3e3e3"></div>
<div style="left:65px;top:490px;width:1px;height:17px;background:#e3e3e3"></div>
<div style="left:127px;top:490px;width:1px;height:17px;background:#e3e3e3"></div>
<div style="left:208px;top:490px;width:1px;height:17px;background:#e3e3e3"></div>
<div style="left:295px;top:490px;width:1px;height:17px;background:#e3e3e3"></div>
<div style="left:382px;top:490px;width:1px;height:17px;background:#e3e3e3"></div>
<div style="left:432px;top:490px;width:1px;height:17px;background:#e3e3e3"></div>
<div style="left:507px;top:490px;width:1px;height:17px;background:#e3e3e3"></div>
<div style="left:582px;top:490px;width:1px;height:17px;background:#e3e3e3"></div>
<div style="left:644px;top:490px;width:1px;height:17px;background:#e3e3e3"></div>
<div style="left:706px;top:490px;width:1px;height:17px;background:#e3e3e3"></div>
<div style="left:768px;top:490px;width:1px;height:17px;background:#e3e3e3"></div>
<div style="left:830px;top:490px;width:1px;height:17px;background:#e3e3e3"></div>
<div style="left:892px;top:490px;width:1px;height:17px;background:#e3e3e3"></div>
<div style="left:954px;top:490px;width:1px;height:17px;background:#e3e3e3"></div>
<div style="left:1029px;top:490px;width:1px;height:17px;background:#e3e3e3"></div>
<div style="left:1104px;top:490px;width:1px;height:17px;background:#e3e3e3"></div>
<div class="t" style="left:-368px;width:400px;text-align:right;top:491px;">10</div>
<div style="left:68px;top:490px"><svg width="15" height="15" viewBox="0 0 15 15"><path d="M3.3 3.3L11.7 11.7M11.7 3.3L3.3 11.7" fill="none" stroke="#9a0a16" stroke-width="6.2" stroke-linecap="round"/><path d="M3.4 3.4L11.6 11.6M11.6 3.4L3.4 11.6" fill="none" stroke="#d02a34" stroke-width="4.2" stroke-linecap="round"/></svg></div>
<div class="t" style="left:88px;top:491px;">drop</div>
<div class="t" style="left:130px;top:491px;">input</div>
<div style="left:5px;top:507px;width:1118px;height:1px;background:#e3e3e3"></div>
<div class="t" style="left:23px;top:509px;letter-spacing:-0.7px">:::</div>
<div class="t" style="left:36px;top:509px;">defconf: accept in ipsec policy</div>
<div style="left:5px;top:525px;width:1118px;height:1px;background:#e3e3e3"></div>
<div style="left:34px;top:526px;width:1px;height:17px;background:#e3e3e3"></div>
<div style="left:65px;top:526px;width:1px;height:17px;background:#e3e3e3"></div>
<div style="left:127px;top:526px;width:1px;height:17px;background:#e3e3e3"></div>
<div style="left:208px;top:526px;width:1px;height:17px;background:#e3e3e3"></div>
<div style="left:295px;top:526px;width:1px;height:17px;background:#e3e3e3"></div>
<div style="left:382px;top:526px;width:1px;height:17px;background:#e3e3e3"></div>
<div style="left:432px;top:526px;width:1px;height:17px;background:#e3e3e3"></div>
<div style="left:507px;top:526px;width:1px;height:17px;background:#e3e3e3"></div>
<div style="left:582px;top:526px;width:1px;height:17px;background:#e3e3e3"></div>
<div style="left:644px;top:526px;width:1px;height:17px;background:#e3e3e3"></div>
<div style="left:706px;top:526px;width:1px;height:17px;background:#e3e3e3"></div>
<div style="left:768px;top:526px;width:1px;height:17px;background:#e3e3e3"></div>
<div style="left:830px;top:526px;width:1px;height:17px;background:#e3e3e3"></div>
<div style="left:892px;top:526px;width:1px;height:17px;background:#e3e3e3"></div>
<div style="left:954px;top:526px;width:1px;height:17px;background:#e3e3e3"></div>
<div style="left:1029px;top:526px;width:1px;height:17px;background:#e3e3e3"></div>
<div style="left:1104px;top:526px;width:1px;height:17px;background:#e3e3e3"></div>
<div class="t" style="left:-368px;width:400px;text-align:right;top:527px;">11</div>
<div style="left:68px;top:528px"><svg width="15" height="12" viewBox="0 0 15 12"><path d="M10 0H14L15 1V5H14V7H12V9H10V10H9V11H8V12H5V11H4V10H3V8H2V7H0V5H2V3H3V2H5V3H8V2H9V1H10Z" fill="#22a800"/><path d="M3.6 5L6.5 9.3L12.8 2.6" fill="none" stroke="#40ee00" stroke-width="2.6" stroke-linejoin="round" stroke-linecap="round"/></svg></div>
<div class="t" style="left:88px;top:527px;">acc<span style="letter-spacing:-0.9px">...</span></div>
<div class="t" style="left:130px;top:527px;">forward</div>
<div style="left:5px;top:543px;width:1118px;height:1px;background:#e3e3e3"></div>
<div class="t" style="left:23px;top:545px;letter-spacing:-0.7px">:::</div>
<div class="t" style="left:36px;top:545px;">defconf: accept out ipsec policy</div>
<div style="left:5px;top:561px;width:1118px;height:1px;background:#e3e3e3"></div>
<div style="left:34px;top:562px;width:1px;height:17px;background:#e3e3e3"></div>
<div style="left:65px;top:562px;width:1px;height:17px;background:#e3e3e3"></div>
<div style="left:127px;top:562px;width:1px;height:17px;background:#e3e3e3"></div>
<div style="left:208px;top:562px;width:1px;height:17px;background:#e3e3e3"></div>
<div style="left:295px;top:562px;width:1px;height:17px;background:#e3e3e3"></div>
<div style="left:382px;top:562px;width:1px;height:17px;background:#e3e3e3"></div>
<div style="left:432px;top:562px;width:1px;height:17px;background:#e3e3e3"></div>
<div style="left:507px;top:562px;width:1px;height:17px;background:#e3e3e3"></div>
<div style="left:582px;top:562px;width:1px;height:17px;background:#e3e3e3"></div>
<div style="left:644px;top:562px;width:1px;height:17px;background:#e3e3e3"></div>
<div style="left:706px;top:562px;width:1px;height:17px;background:#e3e3e3"></div>
<div style="left:768px;top:562px;width:1px;height:17px;background:#e3e3e3"></div>
<div style="left:830px;top:562px;width:1px;height:17px;background:#e3e3e3"></div>
<div style="left:892px;top:562px;width:1px;height:17px;background:#e3e3e3"></div>
<div style="left:954px;top:562px;width:1px;height:17px;background:#e3e3e3"></div>
<div style="left:1029px;top:562px;width:1px;height:17px;background:#e3e3e3"></div>
<div style="left:1104px;top:562px;width:1px;height:17px;background:#e3e3e3"></div>
<div class="t" style="left:-368px;width:400px;text-align:right;top:563px;">12</div>
<div style="left:68px;top:564px"><svg width="15" height="12" viewBox="0 0 15 12"><path d="M10 0H14L15 1V5H14V7H12V9H10V10H9V11H8V12H5V11H4V10H3V8H2V7H0V5H2V3H3V2H5V3H8V2H9V1H10Z" fill="#22a800"/><path d="M3.6 5L6.5 9.3L12.8 2.6" fill="none" stroke="#40ee00" stroke-width="2.6" stroke-linejoin="round" stroke-linecap="round"/></svg></div>
<div class="t" style="left:88px;top:563px;">acc<span style="letter-spacing:-0.9px">...</span></div>
<div class="t" style="left:130px;top:563px;">forward</div>
<div style="left:5px;top:579px;width:1118px;height:1px;background:#e3e3e3"></div>
<div class="t" style="left:23px;top:581px;letter-spacing:-0.7px">:::</div>
<div class="t" style="left:36px;top:581px;">defconf: fasttrack</div>
<div style="left:5px;top:597px;width:1118px;height:1px;background:#e3e3e3"></div>
<div style="left:34px;top:598px;width:1px;height:17px;background:#e3e3e3"></div>
<div style="left:65px;top:598px;width:1px;height:17px;background:#e3e3e3"></div>
<div style="left:127px;top:598px;width:1px;height:17px;background:#e3e3e3"></div>
<div style="left:208px;top:598px;width:1px;height:17px;background:#e3e3e3"></div>
<div style="left:295px;top:598px;width:1px;height:17px;background:#e3e3e3"></div>
<div style="left:382px;top:598px;width:1px;height:17px;background:#e3e3e3"></div>
<div style="left:432px;top:598px;width:1px;height:17px;background:#e3e3e3"></div>
<div style="left:507px;top:598px;width:1px;height:17px;background:#e3e3e3"></div>
<div style="left:582px;top:598px;width:1px;height:17px;background:#e3e3e3"></div>
<div style="left:644px;top:598px;width:1px;height:17px;background:#e3e3e3"></div>
<div style="left:706px;top:598px;width:1px;height:17px;background:#e3e3e3"></div>
<div style="left:768px;top:598px;width:1px;height:17px;background:#e3e3e3"></div>
<div style="left:830px;top:598px;width:1px;height:17px;background:#e3e3e3"></div>
<div style="left:892px;top:598px;width:1px;height:17px;background:#e3e3e3"></div>
<div style="left:954px;top:598px;width:1px;height:17px;background:#e3e3e3"></div>
<div style="left:1029px;top:598px;width:1px;height:17px;background:#e3e3e3"></div>
<div style="left:1104px;top:598px;width:1px;height:17px;background:#e3e3e3"></div>
<div class="t" style="left:-368px;width:400px;text-align:right;top:599px;">13</div>
<div style="left:68px;top:598px"><svg width="15" height="15" viewBox="0 0 15 15"><defs><linearGradient id="ftg" x1="0" y1="0" x2="0" y2="1"><stop offset="0" stop-color="#5ab8e8"/><stop offset="0.5" stop-color="#2ab0f0"/><stop offset="1" stop-color="#2a70b0"/></linearGradient></defs><rect x="0" y="0" width="1.6" height="15" fill="#c8d8e8"/><path d="M2 0.5l5.5 7-5.5 7z" fill="url(#ftg)" stroke="#3a78b0" stroke-width="0.8"/><path d="M7.2 0.5l6.5 7-6.5 7z" fill="url(#ftg)" stroke="#3a78b0" stroke-width="0.8"/></svg></div>
<div class="t" style="left:88px;top:599px;">fasttr<span style="letter-spacing:-0.9px">...</span></div>
<div class="t" style="left:130px;top:599px;">forward</div>
<div style="left:5px;top:615px;width:1118px;height:1px;background:#e3e3e3"></div>
<div class="t" style="left:23px;top:617px;letter-spacing:-0.7px">:::</div>
<div class="t" style="left:36px;top:617px;">defconf: accept established,related, untracked</div>
<div style="left:5px;top:633px;width:1118px;height:1px;background:#e3e3e3"></div>
<div style="left:34px;top:634px;width:1px;height:17px;background:#e3e3e3"></div>
<div style="left:65px;top:634px;width:1px;height:17px;background:#e3e3e3"></div>
<div style="left:127px;top:634px;width:1px;height:17px;background:#e3e3e3"></div>
<div style="left:208px;top:634px;width:1px;height:17px;background:#e3e3e3"></div>
<div style="left:295px;top:634px;width:1px;height:17px;background:#e3e3e3"></div>
<div style="left:382px;top:634px;width:1px;height:17px;background:#e3e3e3"></div>
<div style="left:432px;top:634px;width:1px;height:17px;background:#e3e3e3"></div>
<div style="left:507px;top:634px;width:1px;height:17px;background:#e3e3e3"></div>
<div style="left:582px;top:634px;width:1px;height:17px;background:#e3e3e3"></div>
<div style="left:644px;top:634px;width:1px;height:17px;background:#e3e3e3"></div>
<div style="left:706px;top:634px;width:1px;height:17px;background:#e3e3e3"></div>
<div style="left:768px;top:634px;width:1px;height:17px;background:#e3e3e3"></div>
<div style="left:830px;top:634px;width:1px;height:17px;background:#e3e3e3"></div>
<div style="left:892px;top:634px;width:1px;height:17px;background:#e3e3e3"></div>
<div style="left:954px;top:634px;width:1px;height:17px;background:#e3e3e3"></div>
<div style="left:1029px;top:634px;width:1px;height:17px;background:#e3e3e3"></div>
<div style="left:1104px;top:634px;width:1px;height:17px;background:#e3e3e3"></div>
<div class="t" style="left:-368px;width:400px;text-align:right;top:635px;">14</div>
<div style="left:68px;top:636px"><svg width="15" height="12" viewBox="0 0 15 12"><path d="M10 0H14L15 1V5H14V7H12V9H10V10H9V11H8V12H5V11H4V10H3V8H2V7H0V5H2V3H3V2H5V3H8V2H9V1H10Z" fill="#22a800"/><path d="M3.6 5L6.5 9.3L12.8 2.6" fill="none" stroke="#40ee00" stroke-width="2.6" stroke-linejoin="round" stroke-linecap="round"/></svg></div>
<div class="t" style="left:88px;top:635px;">acc<span style="letter-spacing:-0.9px">...</span></div>
<div class="t" style="left:130px;top:635px;">forward</div>
<div style="left:5px;top:651px;width:1118px;height:1px;background:#e3e3e3"></div>
<div class="t" style="left:23px;top:653px;letter-spacing:-0.7px">:::</div>
<div class="t" style="left:36px;top:653px;">defconf: drop invalid</div>
<div style="left:5px;top:669px;width:1118px;height:1px;background:#e3e3e3"></div>
<div style="left:34px;top:670px;width:1px;height:17px;background:#e3e3e3"></div>
<div style="left:65px;top:670px;width:1px;height:17px;background:#e3e3e3"></div>
<div style="left:127px;top:670px;width:1px;height:17px;background:#e3e3e3"></div>
<div style="left:208px;top:670px;width:1px;height:17px;background:#e3e3e3"></div>
<div style="left:295px;top:670px;width:1px;height:17px;background:#e3e3e3"></div>
<div style="left:382px;top:670px;width:1px;height:17px;background:#e3e3e3"></div>
<div style="left:432px;top:670px;width:1px;height:17px;background:#e3e3e3"></div>
<div style="left:507px;top:670px;width:1px;height:17px;background:#e3e3e3"></div>
<div style="left:582px;top:670px;width:1px;height:17px;background:#e3e3e3"></div>
<div style="left:644px;top:670px;width:1px;height:17px;background:#e3e3e3"></div>
<div style="left:706px;top:670px;width:1px;height:17px;background:#e3e3e3"></div>
<div style="left:768px;top:670px;width:1px;height:17px;background:#e3e3e3"></div>
<div style="left:830px;top:670px;width:1px;height:17px;background:#e3e3e3"></div>
<div style="left:892px;top:670px;width:1px;height:17px;background:#e3e3e3"></div>
<div style="left:954px;top:670px;width:1px;height:17px;background:#e3e3e3"></div>
<div style="left:1029px;top:670px;width:1px;height:17px;background:#e3e3e3"></div>
<div style="left:1104px;top:670px;width:1px;height:17px;background:#e3e3e3"></div>
<div class="t" style="left:-368px;width:400px;text-align:right;top:671px;">15</div>
<div style="left:68px;top:670px"><svg width="15" height="15" viewBox="0 0 15 15"><path d="M3.3 3.3L11.7 11.7M11.7 3.3L3.3 11.7" fill="none" stroke="#9a0a16" stroke-width="6.2" stroke-linecap="round"/><path d="M3.4 3.4L11.6 11.6M11.6 3.4L3.4 11.6" fill="none" stroke="#d02a34" stroke-width="4.2" stroke-linecap="round"/></svg></div>
<div class="t" style="left:88px;top:671px;">drop</div>
<div class="t" style="left:130px;top:671px;">forward</div>
<div style="left:5px;top:687px;width:1118px;height:1px;background:#e3e3e3"></div>
<div class="t" style="left:23px;top:689px;letter-spacing:-0.7px">:::</div>
<div class="t" style="left:36px;top:689px;">defconf: drop all from WAN not DSTNATed</div>
<div style="left:5px;top:705px;width:1118px;height:1px;background:#e3e3e3"></div>
<div style="left:34px;top:706px;width:1px;height:17px;background:#e3e3e3"></div>
<div style="left:65px;top:706px;width:1px;height:17px;background:#e3e3e3"></div>
<div style="left:127px;top:706px;width:1px;height:17px;background:#e3e3e3"></div>
<div style="left:208px;top:706px;width:1px;height:17px;background:#e3e3e3"></div>
<div style="left:295px;top:706px;width:1px;height:17px;background:#e3e3e3"></div>
<div style="left:382px;top:706px;width:1px;height:17px;background:#e3e3e3"></div>
<div style="left:432px;top:706px;width:1px;height:17px;background:#e3e3e3"></div>
<div style="left:507px;top:706px;width:1px;height:17px;background:#e3e3e3"></div>
<div style="left:582px;top:706px;width:1px;height:17px;background:#e3e3e3"></div>
<div style="left:644px;top:706px;width:1px;height:17px;background:#e3e3e3"></div>
<div style="left:706px;top:706px;width:1px;height:17px;background:#e3e3e3"></div>
<div style="left:768px;top:706px;width:1px;height:17px;background:#e3e3e3"></div>
<div style="left:830px;top:706px;width:1px;height:17px;background:#e3e3e3"></div>
<div style="left:892px;top:706px;width:1px;height:17px;background:#e3e3e3"></div>
<div style="left:954px;top:706px;width:1px;height:17px;background:#e3e3e3"></div>
<div style="left:1029px;top:706px;width:1px;height:17px;background:#e3e3e3"></div>
<div style="left:1104px;top:706px;width:1px;height:17px;background:#e3e3e3"></div>
<div class="t" style="left:-368px;width:400px;text-align:right;top:707px;">16</div>
<div style="left:68px;top:706px"><svg width="15" height="15" viewBox="0 0 15 15"><path d="M3.3 3.3L11.7 11.7M11.7 3.3L3.3 11.7" fill="none" stroke="#9a0a16" stroke-width="6.2" stroke-linecap="round"/><path d="M3.4 3.4L11.6 11.6M11.6 3.4L3.4 11.6" fill="none" stroke="#d02a34" stroke-width="4.2" stroke-linecap="round"/></svg></div>
<div class="t" style="left:88px;top:707px;">drop</div>
<div class="t" style="left:130px;top:707px;">forward</div>
<div style="left:5px;top:723px;width:1118px;height:1px;background:#e3e3e3"></div>
<div style="left:5px;top:724px;width:1118px;height:17px;background:#9ec0e8"></div>
<div style="left:34px;top:724px;width:1px;height:17px;background:#e3e3e3"></div>
<div style="left:65px;top:724px;width:1px;height:17px;background:#e3e3e3"></div>
<div style="left:127px;top:724px;width:1px;height:17px;background:#e3e3e3"></div>
<div style="left:208px;top:724px;width:1px;height:17px;background:#e3e3e3"></div>
<div style="left:295px;top:724px;width:1px;height:17px;background:#e3e3e3"></div>
<div style="left:382px;top:724px;width:1px;height:17px;background:#e3e3e3"></div>
<div style="left:432px;top:724px;width:1px;height:17px;background:#e3e3e3"></div>
<div style="left:507px;top:724px;width:1px;height:17px;background:#e3e3e3"></div>
<div style="left:582px;top:724px;width:1px;height:17px;background:#e3e3e3"></div>
<div style="left:644px;top:724px;width:1px;height:17px;background:#e3e3e3"></div>
<div style="left:706px;top:724px;width:1px;height:17px;background:#e3e3e3"></div>
<div style="left:768px;top:724px;width:1px;height:17px;background:#e3e3e3"></div>
<div style="left:830px;top:724px;width:1px;height:17px;background:#e3e3e3"></div>
<div style="left:892px;top:724px;width:1px;height:17px;background:#e3e3e3"></div>
<div style="left:954px;top:724px;width:1px;height:17px;background:#e3e3e3"></div>
<div style="left:1029px;top:724px;width:1px;height:17px;background:#e3e3e3"></div>
<div style="left:1104px;top:724px;width:1px;height:17px;background:#e3e3e3"></div>
<div class="t" style="left:-368px;width:400px;text-align:right;top:725px;">17</div>
<div style="left:68px;top:726px"><svg width="15" height="12" viewBox="0 0 15 12"><path d="M10 0H14L15 1V5H14V7H12V9H10V10H9V11H8V12H5V11H4V10H3V8H2V7H0V5H2V3H3V2H5V3H8V2H9V1H10Z" fill="#22a800"/><path d="M3.6 5L6.5 9.3L12.8 2.6" fill="none" stroke="#40ee00" stroke-width="2.6" stroke-linejoin="round" stroke-linecap="round"/></svg></div>
<div class="t" style="left:88px;top:725px;">acc<span style="letter-spacing:-0.9px">...</span></div>
<div class="t" style="left:130px;top:725px;">input</div>
<div class="t" style="left:385px;top:725px;">6 (tcp)</div>
<div class="t" style="left:510px;top:725px;">1194</div>
<div class="t" style="left:627px;width:400px;text-align:right;top:725px;">0 B</div>
<div class="t" style="left:702px;width:400px;text-align:right;top:725px;">0</div>
<div style="left:5px;top:741px;width:1118px;height:1px;background:#e3e3e3"></div>
<div class="t" style="left:8px;top:813px;">18 items (1 selected)</div>
<div style="left:4px;top:809px;width:1px;height:24px;background:#a0a0a0"></div>
<div style="left:3px;top:834px;width:1122px;height:1px;background:#a0a0a0"></div>
<div style="left:1125px;top:56px;width:1px;height:779px;background:#a0a0a0"></div>
<div style="left:0px;top:837px;width:1128px;height:1px;background:#a0a0a0"></div>
<div style="left:642px;top:8px;width:486px;height:711px;background:#f0f0f0"></div>
<div style="left:642px;top:8px;width:486px;height:1px;background:#000"></div>
<div style="left:642px;top:8px;width:1px;height:711px;background:#111"></div>
<div style="left:643px;top:34px;width:1px;height:683px;background:#f8f8f8"></div>
<div style="left:642px;top:717px;width:486px;height:1px;background:#7a7a7a"></div>
<div style="left:642px;top:718px;width:486px;height:1px;background:#000"></div>
<div style="left:643px;top:9px;width:485px;height:1px;background:#7a7ae2"></div>
<div style="left:643px;top:10px;width:485px;height:24px;background:#4b4fcb"></div>
<div style="left:643px;top:34px;width:485px;height:1px;background:#f8f8f2"></div>
<div style="left:643px;top:9px;width:1px;height:25px;background:#7070dc"></div>
<div class="t" style="left:647px;top:16px;color:#fff;letter-spacing:-0.4px">Firewall Rule &lt;1194&gt;</div>
<div style="left:1088px;top:13px;width:19px;height:19px;background:#e9e7e9;border:1px solid #333;box-shadow:inset 1px 1px 0 #fff,inset -1px -1px 0 #fff;box-sizing:border-box"></div>
<div style="left:1091px;top:16px;width:13px;height:13px;border:1px solid #333;border-top-width:2px;box-sizing:border-box"></div>
<div style="left:1108px;top:13px;width:19px;height:19px;background:#e9e7e9;border:1px solid #333;box-shadow:inset 1px 1px 0 #fff;box-sizing:border-box"></div>
<div style="left:1111px;top:16px"><svg width="13" height="13" viewBox="0 0 13 13"><path d="M1.5 1.5l10 10M11.5 1.5l-10 10" stroke="#333" stroke-width="2"/></svg></div>
<div style="left:647px;top:36px;width:64px;height:29px;background:#f0f0f0;border-left:1px solid #fff;border-top:1px solid #fff;border-right:1px solid #6a6a6a;box-sizing:border-box"></div>
<div class="t" style="left:655px;top:43px;">General</div>
<div style="left:711px;top:39px;width:75px;height:25px;background:#d6d6d6;border-left:1px solid #fbfbfb;border-top:1px solid #fbfbfb;border-right:1px solid #a8a8a8;box-sizing:border-box"></div>
<div class="t" style="left:717px;top:45px;">Advanced</div>
<div style="left:786px;top:39px;width:44px;height:25px;background:#d6d6d6;border-left:1px solid #fbfbfb;border-top:1px solid #fbfbfb;border-right:1px solid #a8a8a8;box-sizing:border-box"></div>
<div class="t" style="left:792px;top:45px;">Extra</div>
<div style="left:830px;top:39px;width:51px;height:25px;background:#d6d6d6;border-left:1px solid #fbfbfb;border-top:1px solid #fbfbfb;border-right:1px solid #a8a8a8;box-sizing:border-box"></div>
<div class="t" style="left:836px;top:45px;">Action</div>
<div style="left:881px;top:39px;width:67px;height:25px;background:#d6d6d6;border-left:1px solid #fbfbfb;border-top:1px solid #fbfbfb;border-right:1px solid #a8a8a8;box-sizing:border-box"></div>
<div class="t" style="left:887px;top:45px;">Statistics</div>
<div style="left:710px;top:64px;width:266px;height:1px;background:#fff"></div>
<div style="left:645px;top:64px;width:1px;height:623px;background:#fff"></div>
<div style="left:976px;top:64px;width:1px;height:624px;background:#a0a0a0"></div>
<div style="left:645px;top:687px;width:332px;height:1px;background:#a0a0a0"></div>
<div class="t" style="left:390px;width:400px;text-align:right;top:77px;">Chain:</div>
<div style="left:794px;top:73px;width:151px;height:22px;background:#fff;border:1px solid #a0a0a0;box-sizing:border-box"></div>
<div style="left:797px;top:75px;width:30px;height:18px;background:#0078d7"></div>
<div class="t" style="left:798px;top:77px;color:#fff;letter-spacing:-0.6px">input</div>
<div style="left:826px;top:75px;width:1px;height:18px;background:#000"></div>
<div style="left:947px;top:73px;width:21px;height:22px;background:#f0f0f0;border:1px solid #a0a0a0;box-shadow:inset 1px 1px 0 #fff;box-sizing:border-box"></div>
<div style="left:953px;top:79px"><svg width="9" height="10" viewBox="0 0 9 10"><rect x="0" y="0" width="9" height="1" fill="#000"/><rect x="3" y="2" width="3" height="3.5" fill="#000"/><path d="M0 5h9l-4.5 4.8z" fill="#000"/></svg></div>
<div class="t" style="left:390px;width:400px;text-align:right;top:106px;">Src. Address:</div>
<div style="left:794px;top:102px;width:151px;height:22px;background:#f0f0f0;border:1px solid #a0a0a0;box-sizing:border-box"></div>
<div style="left:951px;top:110px"><svg width="13" height="7" viewBox="0 0 13 7"><path d="M0 0h13l-6.5 7z" fill="#000"/></svg></div>
<div class="t" style="left:390px;width:400px;text-align:right;top:135px;">Dst. Address:</div>
<div style="left:794px;top:131px;width:151px;height:22px;background:#f0f0f0;border:1px solid #a0a0a0;box-sizing:border-box"></div>
<div style="left:951px;top:139px"><svg width="13" height="7" viewBox="0 0 13 7"><path d="M0 0h13l-6.5 7z" fill="#000"/></svg></div>
<div style="left:654px;top:162px;width:314px;height:1px;background:#a0a0a0"></div>
<div style="left:654px;top:163px;width:314px;height:1px;background:#fff"></div>
<div class="t" style="left:390px;width:400px;text-align:right;top:175px;">Protocol:</div>
<div style="left:794px;top:175px;width:14px;height:14px;background:#fff;border:1px solid #a0a0a0;box-sizing:border-box"></div>
<div style="left:818px;top:171px;width:105px;height:22px;background:#fff;border:1px solid #a0a0a0;box-sizing:border-box"></div>
<div class="t" style="left:822px;top:175px;">6 (tcp)</div>
<div style="left:924px;top:171px;width:21px;height:22px;background:#f0f0f0;border:1px solid #a0a0a0;box-shadow:inset 1px 1px 0 #fff;box-sizing:border-box"></div>
<div style="left:930px;top:177px"><svg width="9" height="10" viewBox="0 0 9 10"><rect x="0" y="0" width="9" height="1" fill="#000"/><rect x="3" y="2" width="3" height="3.5" fill="#000"/><path d="M0 5h9l-4.5 4.8z" fill="#000"/></svg></div>
<div style="left:951px;top:179px"><svg width="13" height="7" viewBox="0 0 13 7"><path d="M0 7h13l-6.5-7z" fill="#000"/></svg></div>
<div class="t" style="left:390px;width:400px;text-align:right;top:204px;">Src. Port:</div>
<div style="left:794px;top:200px;width:151px;height:22px;background:#f0f0f0;border:1px solid #a0a0a0;box-sizing:border-box"></div>
<div style="left:951px;top:208px"><svg width="13" height="7" viewBox="0 0 13 7"><path d="M0 0h13l-6.5 7z" fill="#000"/></svg></div>
<div class="t" style="left:390px;width:400px;text-align:right;top:233px;">Dst. Port:</div>
<div style="left:794px;top:233px;width:14px;height:14px;background:#fff;border:1px solid #a0a0a0;box-sizing:border-box"></div>
<div style="left:818px;top:229px;width:127px;height:22px;background:#fff;border:1px solid #a0a0a0;box-sizing:border-box"></div>
<div class="t" style="left:822px;top:233px;">1194</div>
<div style="left:951px;top:237px"><svg width="13" height="7" viewBox="0 0 13 7"><path d="M0 7h13l-6.5-7z" fill="#000"/></svg></div>
<div class="t" style="left:390px;width:400px;text-align:right;top:262px;">Any. Port:</div>
<div style="left:794px;top:258px;width:151px;height:22px;background:#f0f0f0;border:1px solid #a0a0a0;box-sizing:border-box"></div>
<div style="left:951px;top:266px"><svg width="13" height="7" viewBox="0 0 13 7"><path d="M0 0h13l-6.5 7z" fill="#000"/></svg></div>
<div class="t" style="left:390px;width:400px;text-align:right;top:291px;">In. Interface:</div>
<div style="left:794px;top:287px;width:151px;height:22px;background:#f0f0f0;border:1px solid #a0a0a0;box-sizing:border-box"></div>
<div style="left:951px;top:295px"><svg width="13" height="7" viewBox="0 0 13 7"><path d="M0 0h13l-6.5 7z" fill="#000"/></svg></div>
<div class="t" style="left:390px;width:400px;text-align:right;top:320px;">Out. Interface:</div>
<div style="left:794px;top:316px;width:151px;height:22px;background:#f0f0f0;border:1px solid #a0a0a0;box-sizing:border-box"></div>
<div style="left:951px;top:324px"><svg width="13" height="7" viewBox="0 0 13 7"><path d="M0 0h13l-6.5 7z" fill="#000"/></svg></div>
<div style="left:654px;top:347px;width:314px;height:1px;background:#a0a0a0"></div>
<div style="left:654px;top:348px;width:314px;height:1px;background:#fff"></div>
<div class="t" style="left:390px;width:400px;text-align:right;top:360px;">In. Interface List:</div>
<div style="left:794px;top:356px;width:151px;height:22px;background:#f0f0f0;border:1px solid #a0a0a0;box-sizing:border-box"></div>
<div style="left:951px;top:364px"><svg width="13" height="7" viewBox="0 0 13 7"><path d="M0 0h13l-6.5 7z" fill="#000"/></svg></div>
<div class="t" style="left:390px;width:400px;text-align:right;top:389px;">Out. Interface List:</div>
<div style="left:794px;top:385px;width:151px;height:22px;background:#f0f0f0;border:1px solid #a0a0a0;box-sizing:border-box"></div>
<div style="left:951px;top:393px"><svg width="13" height="7" viewBox="0 0 13 7"><path d="M0 0h13l-6.5 7z" fill="#000"/></svg></div>
<div style="left:654px;top:416px;width:314px;height:1px;background:#a0a0a0"></div>
<div style="left:654px;top:417px;width:314px;height:1px;background:#fff"></div>
<div class="t" style="left:390px;width:400px;text-align:right;top:429px;">Packet Mark:</div>
<div style="left:794px;top:425px;width:151px;height:22px;background:#f0f0f0;border:1px solid #a0a0a0;box-sizing:border-box"></div>
<div style="left:951px;top:433px"><svg width="13" height="7" viewBox="0 0 13 7"><path d="M0 0h13l-6.5 7z" fill="#000"/></svg></div>
<div class="t" style="left:390px;width:400px;text-align:right;top:458px;">Connection Mark:</div>
<div style="left:794px;top:454px;width:151px;height:22px;background:#f0f0f0;border:1px solid #a0a0a0;box-sizing:border-box"></div>
<div style="left:951px;top:462px"><svg width="13" height="7" viewBox="0 0 13 7"><path d="M0 0h13l-6.5 7z" fill="#000"/></svg></div>
<div class="t" style="left:390px;width:400px;text-align:right;top:487px;">Routing Mark:</div>
<div style="left:794px;top:483px;width:151px;height:22px;background:#f0f0f0;border:1px solid #a0a0a0;box-sizing:border-box"></div>
<div style="left:951px;top:491px"><svg width="13" height="7" viewBox="0 0 13 7"><path d="M0 0h13l-6.5 7z" fill="#000"/></svg></div>
<div class="t" style="left:390px;width:400px;text-align:right;top:516px;">Routing Table:</div>
<div style="left:794px;top:512px;width:151px;height:22px;background:#f0f0f0;border:1px solid #a0a0a0;box-sizing:border-box"></div>
<div style="left:951px;top:520px"><svg width="13" height="7" viewBox="0 0 13 7"><path d="M0 0h13l-6.5 7z" fill="#000"/></svg></div>
<div style="left:654px;top:543px;width:314px;height:1px;background:#a0a0a0"></div>
<div style="left:654px;top:544px;width:314px;height:1px;background:#fff"></div>
<div class="t" style="left:390px;width:400px;text-align:right;top:556px;">Connection Type:</div>
<div style="left:794px;top:552px;width:151px;height:22px;background:#f0f0f0;border:1px solid #a0a0a0;box-sizing:border-box"></div>
<div style="left:951px;top:560px"><svg width="13" height="7" viewBox="0 0 13 7"><path d="M0 0h13l-6.5 7z" fill="#000"/></svg></div>
<div class="t" style="left:390px;width:400px;text-align:right;top:585px;">Connection State:</div>
<div style="left:794px;top:581px;width:151px;height:22px;background:#f0f0f0;border:1px solid #a0a0a0;box-sizing:border-box"></div>
<div style="left:951px;top:589px"><svg width="13" height="7" viewBox="0 0 13 7"><path d="M0 0h13l-6.5 7z" fill="#000"/></svg></div>
<div class="t" style="left:390px;width:400px;text-align:right;top:614px;">Connection NAT State:</div>
<div style="left:794px;top:610px;width:151px;height:22px;background:#f0f0f0;border:1px solid #a0a0a0;box-sizing:border-box"></div>
<div style="left:951px;top:618px"><svg width="13" height="7" viewBox="0 0 13 7"><path d="M0 0h13l-6.5 7z" fill="#000"/></svg></div>
<div style="left:989px;top:41px;width:131px;height:28px;background:#f0f0f0;border:1px solid #000;box-shadow:inset 1px 1px 0 #fff;box-sizing:border-box"></div>
<div class="t" style="left:855px;width:400px;text-align:center;top:48px;">OK</div>
<div style="left:989px;top:72px;width:131px;height:28px;background:#f0f0f0;border:1px solid #8c8c8c;box-shadow:inset 1px 1px 0 #fff;box-sizing:border-box"></div>
<div class="t" style="left:855px;width:400px;text-align:center;top:79px;">Cancel</div>
<div style="left:989px;top:103px;width:131px;height:28px;background:#f0f0f0;border:1px solid #8c8c8c;box-shadow:inset 1px 1px 0 #fff;box-sizing:border-box"></div>
<div class="t" style="left:855px;width:400px;text-align:center;top:110px;">Apply</div>
<div style="left:989px;top:139px;width:131px;height:28px;background:#f0f0f0;border:1px solid #8c8c8c;box-shadow:inset 1px 1px 0 #fff;box-sizing:border-box"></div>
<div class="t" style="left:855px;width:400px;text-align:center;top:146px;">Disable</div>
<div style="left:989px;top:170px;width:131px;height:28px;background:#f0f0f0;border:1px solid #8c8c8c;box-shadow:inset 1px 1px 0 #fff;box-sizing:border-box"></div>
<div class="t" style="left:855px;width:400px;text-align:center;top:177px;">Comment</div>
<div style="left:989px;top:201px;width:131px;height:28px;background:#f0f0f0;border:1px solid #8c8c8c;box-shadow:inset 1px 1px 0 #fff;box-sizing:border-box"></div>
<div class="t" style="left:855px;width:400px;text-align:center;top:208px;">Copy</div>
<div style="left:989px;top:232px;width:131px;height:28px;background:#f0f0f0;border:1px solid #8c8c8c;box-shadow:inset 1px 1px 0 #fff;box-sizing:border-box"></div>
<div class="t" style="left:855px;width:400px;text-align:center;top:239px;">Remove</div>
<div style="left:989px;top:263px;width:131px;height:28px;background:#f0f0f0;border:1px solid #8c8c8c;box-shadow:inset 1px 1px 0 #fff;box-sizing:border-box"></div>
<div class="t" style="left:855px;width:400px;text-align:center;top:270px;">Reset Counters</div>
<div style="left:989px;top:294px;width:131px;height:28px;background:#f0f0f0;border:1px solid #8c8c8c;box-shadow:inset 1px 1px 0 #fff;box-sizing:border-box"></div>
<div class="t" style="left:855px;width:400px;text-align:center;top:301px;">Reset All Counters</div>
<div style="left:645px;top:690px;width:237px;height:24px;background:#f0f0f0;border-left:1px solid #a0a0a0;border-top:1px solid #a0a0a0;border-right:1px solid #fff;border-bottom:1px solid #fff;box-sizing:border-box"></div>
<div class="t" style="left:649px;top:695px;">enabled</div>
<div style="left:884px;top:690px;width:242px;height:24px;background:#f0f0f0;border-left:1px solid #a0a0a0;border-top:1px solid #a0a0a0;border-right:1px solid #fff;border-bottom:1px solid #fff;box-sizing:border-box"></div>
</body></html>
